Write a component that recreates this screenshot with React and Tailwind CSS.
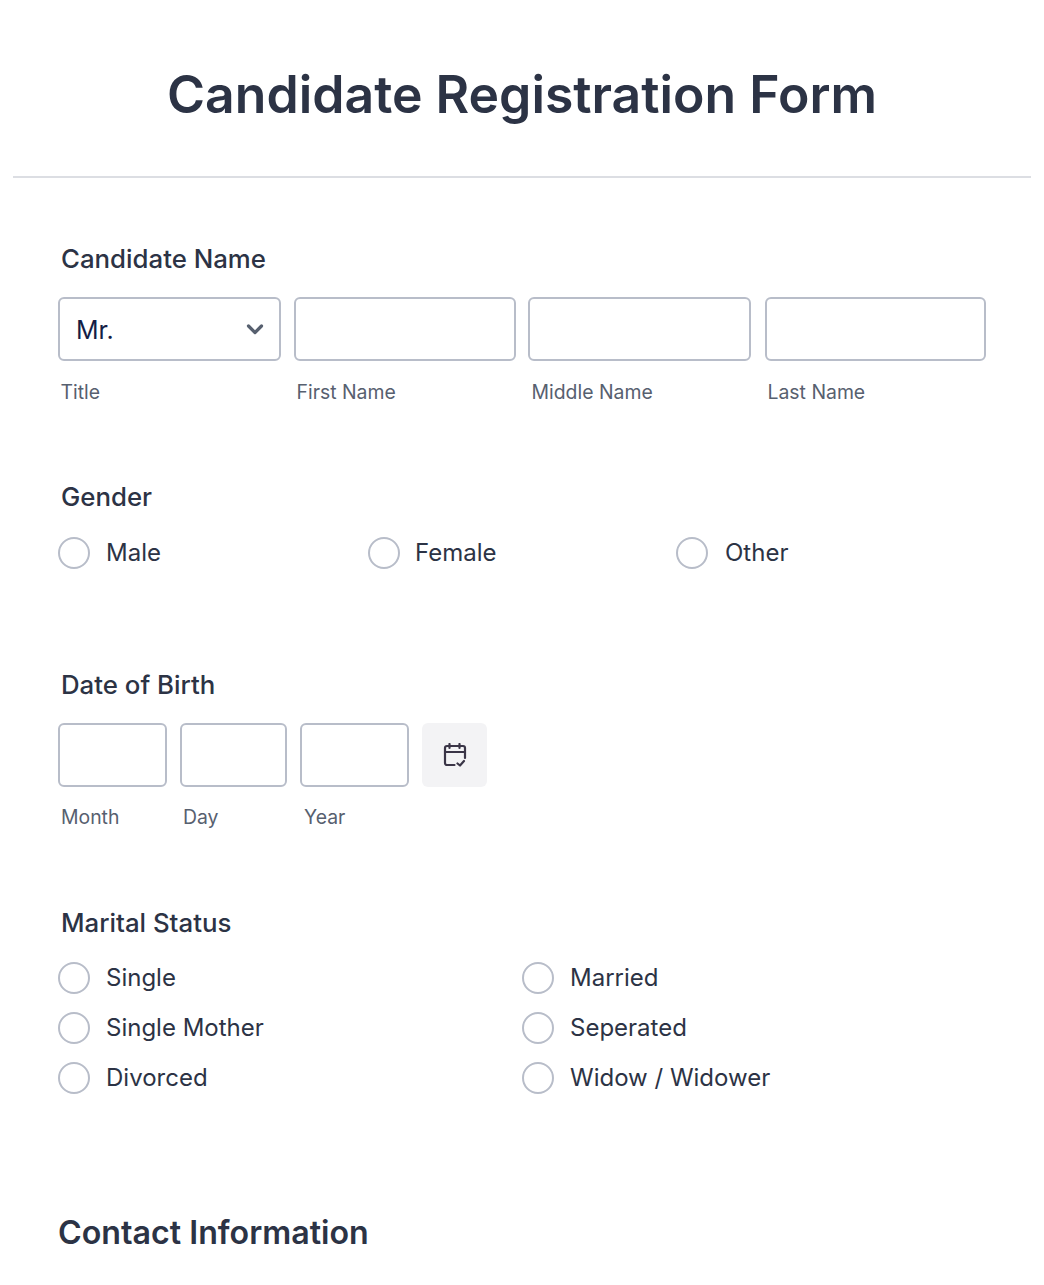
import React from "react";

const font = { fontFamily: "Inter, 'Noto Sans', sans-serif" };

function Radio({ label, className = "", labelClass = "ml-[16px]" }) {
  return (
    <div className={`flex items-center h-8 ${className}`}>
      <span className="w-[32px] h-[32px] shrink-0 rounded-full border-2 border-[#b8bdc9] bg-white" />
      <span className={`${labelClass} text-[24px] leading-8 text-[#2c3345]`}>{label}</span>
    </div>
  );
}

function Field({ className, children, label, labelClass = "ml-[2.500px] mt-[19px] mb-[1px]" }) {
  return (
    <div className={className}>
      <div className="h-[64px] rounded-[6px] border-2 border-[#b8bdc9] bg-white flex items-center px-4">{children}</div>
      <div className={`${labelClass} text-[19.400px] leading-6 text-[#57606f]`}>{label}</div>
    </div>
  );
}

function Heading({ children }) {
  return <div className="ml-[3px] text-[25.800px] leading-8 font-medium text-[#2c3345]">{children}</div>;
}

export default function App() {
  return (
    <div style={font} className="w-[1044px] h-[1285px] overflow-hidden bg-white">
      <div className="mx-[13px] h-[178px] border-b-2 border-[#dcdee3] pt-[58px]">
        <h1 className="text-center text-[51.700px] leading-[72px] font-semibold text-[#2c3345]">Candidate Registration Form</h1>
      </div>
      <div className="pl-[58px] pr-[58px]">
        <div className="pt-[65px]">
          <Heading>Candidate Name</Heading>
          <div className="mt-[22px] flex">
            <Field className="w-[223px]" label="Title">
              <span className="pt-[3px] text-[25px] text-[#141e46]">Mr.</span>
              <svg className="ml-auto -mr-[2px]" width="20" height="20" viewBox="0 0 20 20" fill="none" stroke="#57606f" strokeWidth="3.200" strokeLinecap="round" strokeLinejoin="round"><path d="M3.500 7l6.500 6.500L16.500 7" /></svg>
            </Field>
            <Field className="w-[222px] ml-[13px]" label="First Name" />
            <Field className="w-[223px] ml-[12px]" label="Middle Name" labelClass="ml-[3.500px] mt-[19px] mb-[1px]" />
            <Field className="w-[221px] ml-[14px]" label="Last Name" />
          </div>
        </div>
        <div className="pt-[76px]">
          <Heading>Gender</Heading>
          <div className="mt-[24px] flex">
            <Radio label="Male" className="w-[310px]" labelClass="ml-[16px] -mt-[1px]" />
            <Radio label="Female" className="w-[308px]" labelClass="ml-[15px] -mt-[1px]" />
            <Radio label="Other" labelClass="ml-[17px] -mt-[1px]" />
          </div>
        </div>
        <div className="pt-[100px]">
          <Heading>Date of Birth</Heading>
          <div className="mt-[22px] flex">
            <Field className="w-[109px]" label="Month" labelClass="ml-[3px] mt-[18px]" />
            <Field className="w-[107px] ml-[13px]" label="Day" labelClass="ml-[3px] mt-[18px]" />
            <Field className="w-[109px] ml-[13px]" label="Year" labelClass="ml-[4px] mt-[18px]" />
            <div className="ml-[13px] w-[65px] h-[64px] rounded-[6px] bg-[#f3f3f5] flex items-center justify-center">
              <svg width="24" height="24" viewBox="0 0 24 24" fill="none" stroke="#3a3547" strokeWidth="2.200" strokeLinecap="round" strokeLinejoin="round">
                <path d="M11.500 22H4a2 2 0 0 1-2-2V5a2 2 0 0 1 2-2h16a2 2 0 0 1 2 2v10" />
                <path d="M2 9h20M6.500 1v4M16.500 1v4" />
                <path d="M14.500 20.500l2.500 2 4-4.500" />
              </svg>
            </div>
          </div>
        </div>
        <div className="pt-[78px]">
          <Heading>Marital Status</Heading>
          <div className="mt-[23px] grid grid-cols-[464px_1fr] gap-y-[17.800px]">
            <Radio label="Single" />
            <Radio label="Married" />
            <Radio label="Single Mother" />
            <Radio label="Seperated" />
            <Radio label="Divorced" />
            <Radio label="Widow / Widower" />
          </div>
        </div>
        <h2 className="mt-[119px] text-[32.200px] leading-10 font-semibold text-[#2c3345]">Contact Information</h2>
      </div>
    </div>
  );
}
